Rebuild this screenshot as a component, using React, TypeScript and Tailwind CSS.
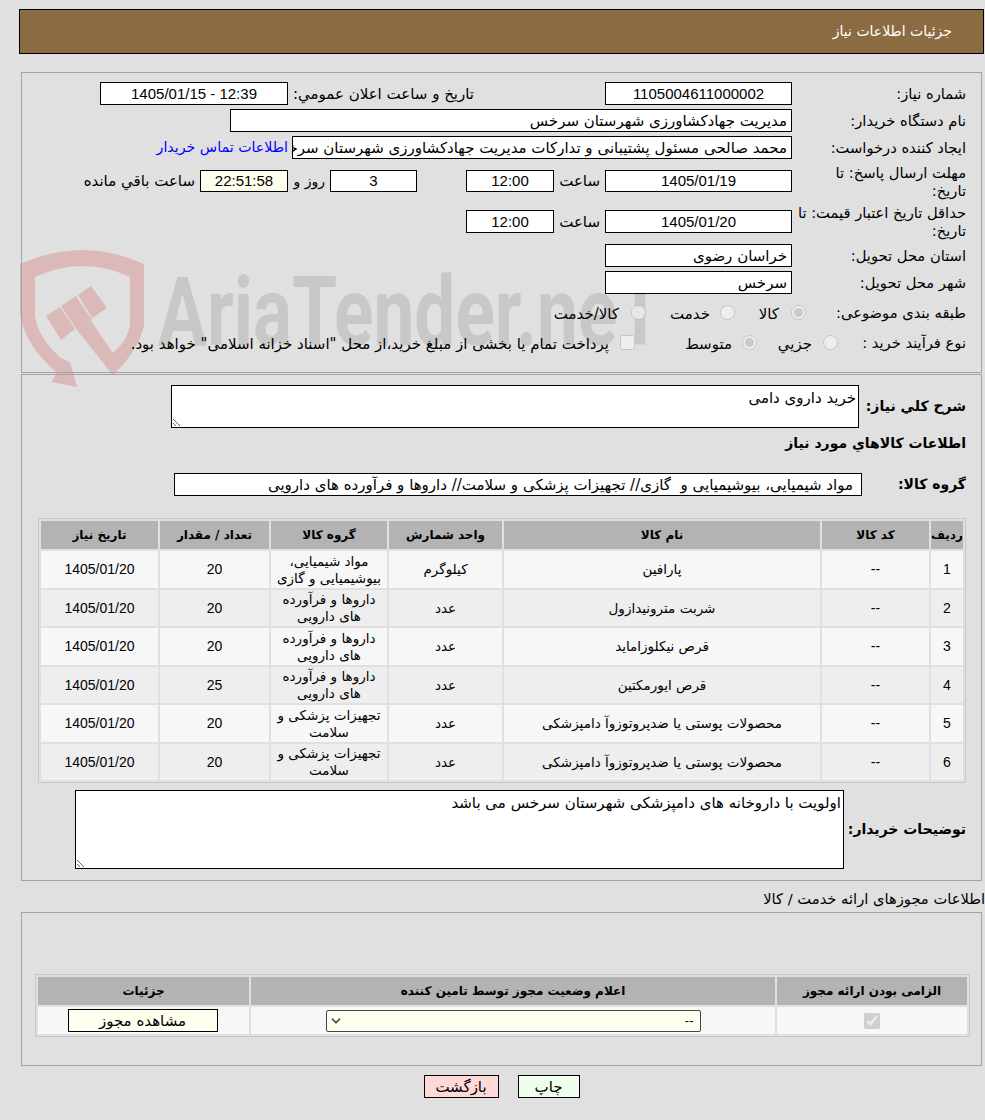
import { ChevronDown } from 'lucide-react';

const FONT = "font-['DejaVu_Sans',sans-serif]";
const DIGITS = "font-['Liberation_Sans',sans-serif]";

const items = [
  { id: 1, name: 'پارافین', unit: 'کیلوگرم', group: 'مواد شیمیایی، بیوشیمیایی و گازی', qty: 20 },
  { id: 2, name: 'شربت مترونیدازول', unit: 'عدد', group: 'داروها و فرآورده های دارویی', qty: 20 },
  { id: 3, name: 'قرص نیکلوزامايد', unit: 'عدد', group: 'داروها و فرآورده های دارویی', qty: 20 },
  { id: 4, name: 'قرص ایورمکتین', unit: 'عدد', group: 'داروها و فرآورده های دارویی', qty: 25 },
  { id: 5, name: 'محصولات پوستی یا ضدپروتوزوآ دامپزشکی', unit: 'عدد', group: 'تجهیزات پزشکی و سلامت', qty: 20 },
  { id: 6, name: 'محصولات پوستی یا ضدپروتوزوآ دامپزشکی', unit: 'عدد', group: 'تجهیزات پزشکی و سلامت', qty: 20 },
];

function Box({ children, className = '' }: { children?: React.ReactNode; className?: string }) {
  return (
    <div className={`flex items-center justify-center border border-black bg-white pt-px text-[15px] whitespace-nowrap overflow-hidden ${className}`}>
      {children}
    </div>
  );
}

function Label({ children, className = 'w-[174px]' }: { children: React.ReactNode; className?: string }) {
  return <div className={`shrink-0 pt-px leading-[18px] text-[14.7px] ${className}`}>{children}</div>;
}

function Watermark() {
  return (
    <div className="absolute left-[15px] top-[245px] pointer-events-none">
      <svg width="140" height="145" viewBox="0 0 140 145" fill="#dbb9b9">
        <path d="M5 19 Q68 -9 129 19 V80 Q124 105 98 130 L90 120 L98 108 Q113 95 115 80 V32 Q68 10 20 32 V70 Q22 92 46 113 L55 117 L62 142 L36 137 L42 128 Q10 100 5 70 Z" />
        <path d="M31 71 L45 62 L60 84 L46 95 Z" />
        <path d="M46 61 L61 51 L77 75 L62 85 Z" />
        <path d="M63 50 L76 41 L92 63 L77 73 Z" />
        <path d="M62 85 L76 76 L98 108 V130 Z" />
      </svg>
    </div>
  );
}

export default function App() {
  return (
    <div dir="rtl" className={`relative min-h-[1120px] bg-[#e0e0e0] text-[15px] text-black overflow-hidden ${FONT}`}>
      <Watermark />
      <div className="absolute left-[158px] top-[262px] pointer-events-none text-[#c8c8c8] text-[96px] leading-[100px] font-bold whitespace-nowrap origin-left scale-x-[0.76] font-['Roboto',sans-serif]" dir="ltr">
        AriaTender.neT
      </div>

      <div className="relative pt-[9px]">
        <div className="ml-[19px] mr-[1px] h-[45px] flex items-center pr-[31px] border border-black bg-[#8b6b41] text-white text-[14px]">
          جزئیات اطلاعات نیاز
        </div>

        {/* main info */}
        <div className="mt-[18px] ml-[21px] mr-[3px] h-[301px] border border-[#a3a3a3] pt-[9px] pr-[15px] flex flex-col gap-1">
          <div className="flex items-center h-[23px]">
            <Label>شماره نیاز:</Label>
            <Box className={`w-[187px] h-[23px] ${DIGITS}`}>1105004611000002</Box>
            <div className="w-[317px] pr-[131px] text-right pt-px">تاریخ و ساعت اعلان عمومي:</div>
            <Box className={`w-[188px] h-[23px] ${DIGITS}`}><span dir="ltr">1405/01/15 - 12:39</span></Box>
          </div>
          <div className="flex items-center h-[23px]">
            <Label>نام دستگاه خریدار:</Label>
            <Box className="w-[562px] h-[23px] !justify-start pr-1">مدیریت جهادکشاورزی شهرستان سرخس</Box>
          </div>
          <div className="flex items-center h-[23px]">
            <Label>ایجاد کننده درخواست:</Label>
            <Box className="w-[500px] h-[23px] !justify-start pr-1">محمد صالحی مسئول پشتیبانی و تدارکات مدیریت جهادکشاورزی شهرستان سرخس</Box>
            <span className="mr-1 text-[#0000ff] text-[14.2px]">اطلاعات تماس خریدار</span>
          </div>
          <div className="flex items-center h-[36px]">
            <Label>مهلت ارسال پاسخ: تا<br />تاریخ:</Label>
            <Box className={`w-[187px] h-[22px] ${DIGITS}`}>1405/01/19</Box>
            <div className="w-[51px] pr-[5px] pt-px">ساعت</div>
            <Box className={`w-[88px] h-[22px] ${DIGITS}`}>12:00</Box>
            <div className="w-[49px]" />
            <Box className={`w-[87px] h-[22px] ${DIGITS}`}>3</Box>
            <div className="w-[42px] pr-[5px] pt-px text-[14px]">روز و</div>
            <Box className={`w-[88px] h-[22px] !bg-[#ffffee] ${DIGITS}`}>22:51:58</Box>
            <div className="pr-[5px] pt-px">ساعت باقي مانده</div>
          </div>
          <div className="flex items-center h-[37px]">
            <Label>حداقل تاریخ اعتبار قیمت: تا<br />تاریخ:</Label>
            <Box className={`w-[187px] h-[23px] ${DIGITS}`}>1405/01/20</Box>
            <div className="w-[51px] pr-[5px] pt-px">ساعت</div>
            <Box className={`w-[88px] h-[23px] ${DIGITS}`}>12:00</Box>
          </div>
          <div className="flex items-center h-[23px]">
            <Label>استان محل تحویل:</Label>
            <Box className="w-[187px] h-[23px] !justify-start pr-1">خراسان رضوی</Box>
          </div>
          <div className="flex items-center h-[23px]">
            <Label>شهر محل تحویل:</Label>
            <Box className="w-[187px] h-[23px] !justify-start pr-1">سرخس</Box>
          </div>
          <div className="flex items-center h-[22px] mt-[3px]">
            <Label className="w-[160px]">طبقه بندی موضوعی:</Label>
            <div className="w-[71px] flex items-center gap-[12px]"><input type="radio" disabled defaultChecked className="m-0 w-[15px] h-[15px]" /><span className="pt-[4px]">کالا</span></div>
            <div className="w-[89px] flex items-center gap-[10px]"><input type="radio" disabled className="m-0 w-[15px] h-[15px]" /><span className="pt-[4px]">خدمت</span></div>
            <div className="flex items-center gap-[12px]"><input type="radio" disabled className="m-0 w-[15px] h-[15px]" /><span className="pt-[4px]">کالا/خدمت</span></div>
          </div>
          <div className="flex items-center h-[22px] mt-[4px]">
            <Label className="w-[128px]">نوع فرآیند خرید :</Label>
            <div className="w-[81px] flex items-center gap-[11px]"><input type="radio" disabled className="m-0 w-[15px] h-[15px]" /><span className="pt-[4px]">جزیي</span></div>
            <div className="w-[122px] flex items-center gap-[10px]"><input type="radio" disabled defaultChecked className="m-0 w-[15px] h-[15px]" /><span className="pt-[4px]">متوسط</span></div>
            <div className="flex items-center gap-[11px] whitespace-nowrap"><input type="checkbox" disabled className="m-0 w-[15px] h-[15px]" /><span className="pt-[4px]">پرداخت تمام یا بخشی از مبلغ خرید،از محل "اسناد خزانه اسلامی" خواهد بود.</span></div>
          </div>
        </div>

        {/* goods */}
        <div className="mt-px ml-[21px] mr-[3px] h-[507px] border border-[#a3a3a3] pt-[10px] pr-[15px] text-[14px]">
          <div className="flex items-center h-[43px]">
            <div className="w-[107px] font-bold">شرح کلي نياز:</div>
            <textarea readOnly defaultValue="خرید داروی دامی" className="w-[688px] h-[43px] border border-black bg-white px-[2px] pt-[4px] text-[15px] leading-[17px] outline-none" />
          </div>
          <div className="mt-[6px] h-[18px] leading-[18px] font-bold">اطلاعات کالاهاي مورد نياز</div>
          <div className="flex items-center h-[23px] mt-[21px]">
            <div className="w-[104px] font-bold">گروه کالا:</div>
            <Box className="w-[688px] h-[23px] !justify-start pr-2">مواد شیمیایی، بیوشیمیایی و{'\u00a0\u00a0'}گازی// تجهیزات پزشکی و سلامت// داروها و فرآورده های دارویی</Box>
          </div>
          <table className="mt-[22px] w-[928px] ml-[15px] table-fixed border border-[#c8c8c8] border-separate border-spacing-[2px] text-[13.5px] text-center">
            <colgroup>
              <col className="w-[32px]" />
              <col className="w-[107px]" />
              <col className="w-[316px]" />
              <col className="w-[113px]" />
              <col className="w-[116px]" />
              <col className="w-[109px]" />
              <col className="w-[117px]" />
            </colgroup>
            <thead>
              <tr className="h-[28px] bg-[#b3b3b3] text-[12px] font-bold">
                <th>ردیف</th>
                <th>کد کالا</th>
                <th>نام کالا</th>
                <th>واحد شمارش</th>
                <th>گروه کالا</th>
                <th>تعداد / مقدار</th>
                <th>تاریخ نیاز</th>
              </tr>
            </thead>
            <tbody>
              {items.map((it) => (
                <tr key={it.id} className={it.id % 2 ? 'h-[37px] bg-[#f7f7f7]' : 'h-[36px] bg-[#eeeeee]'}>
                  <td className={`text-[14px] ${DIGITS}`}>{it.id}</td>
                  <td className={`text-[14px] ${DIGITS}`}>--</td>
                  <td>{it.name}</td>
                  <td>{it.unit}</td>
                  <td className="leading-[17px] px-[2px]">{it.group}</td>
                  <td className={`text-[14px] ${DIGITS}`}>{it.qty}</td>
                  <td className={`text-[14px] ${DIGITS}`}>1405/01/20</td>
                </tr>
              ))}
            </tbody>
          </table>
          <div className="flex items-center mt-[7px] h-[79px]">
            <div className="w-[122px] font-bold">توضیحات خریدار:</div>
            <textarea readOnly defaultValue="اولویت با داروخانه های دامپزشکی شهرستان سرخس می باشد" className="w-[769px] h-[79px] border border-black bg-white px-[2px] pt-[4px] text-[15px] leading-[17px] outline-none" />
          </div>
        </div>

        <div className="mt-[6px] h-[23px] leading-[23px] text-[14.7px]">اطلاعات مجوزهای ارائه خدمت / کالا</div>

        {/* licences */}
        <div className="mt-[2px] ml-[21px] mr-[3px] h-[154px] border border-[#a3a3a3] pt-[61px] pr-[11px]">
          <table className="w-[935px] table-fixed border border-[#c8c8c8] border-separate border-spacing-[2px] text-center">
            <colgroup>
              <col className="w-[190px]" />
              <col className="w-[524px]" />
              <col className="w-[211px]" />
            </colgroup>
            <thead>
              <tr className="h-[28px] bg-[#b3b3b3] text-[12px] font-bold">
                <th>الزامی بودن ارائه مجوز</th>
                <th>اعلام وضعیت مجوز توسط تامین کننده</th>
                <th>جزئیات</th>
              </tr>
            </thead>
            <tbody>
              <tr className="h-[27px] bg-[#f7f7f7]">
                <td><input type="checkbox" disabled defaultChecked className="w-4 h-4 m-0 align-middle" /></td>
                <td>
                  <div className="relative inline-block align-middle">
                    <select defaultValue="--" className={`block w-[375px] h-[22px] appearance-none border border-[#444] rounded-[2px] bg-[#fffff0] text-[13px] pr-[6px] ${DIGITS}`}>
                      <option>--</option>
                    </select>
                    <ChevronDown size={14} strokeWidth={3} className="absolute left-[3px] top-[4px] text-[#444]" />
                  </div>
                </td>
                <td>
                  <button className="w-[150px] h-[23px] mr-[2px] border border-black bg-[#fffff0] text-[15px] align-middle">مشاهده مجوز</button>
                </td>
              </tr>
            </tbody>
          </table>
        </div>

        <div className="mt-[9px] flex justify-center gap-[19px] pl-[18px]">
          <button className="w-[62px] h-[23px] border border-black bg-[#eeffee]">چاپ</button>
          <button className="w-[75px] h-[23px] border border-black bg-[#ffd8d8]">بازگشت</button>
        </div>
      </div>
    </div>
  );
}
